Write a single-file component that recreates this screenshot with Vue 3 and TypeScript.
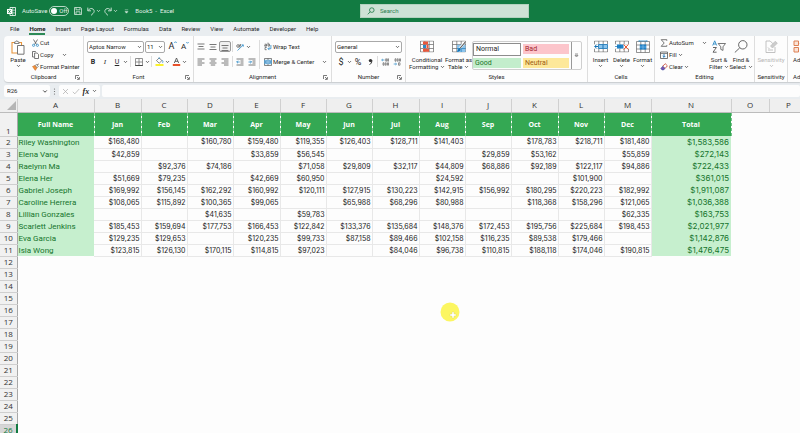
<script setup lang="ts">
import { ref } from 'vue'

interface Person {
  name: string
  months: string[]
  total: string
}

const tabs = ['File', 'Home', 'Insert', 'Page Layout', 'Formulas', 'Data', 'Review', 'View', 'Automate', 'Developer', 'Help']
const activeTab = ref('Home')
const autoSave = ref(false)
const cellRef = ref('R26')

const columnWidths = [17, 77, 47, 46, 46, 47, 46, 46, 47, 46, 46, 47, 46, 47, 80, 38, 39]
const letters = 'ABCDEFGHIJKLMNOP'.split('')
const months = ['Jan', 'Feb', 'Mar', 'Apr', 'May', 'Jun', 'Jul', 'Aug', 'Sep', 'Oct', 'Nov', 'Dec']

function person(name: string, values: string, total: string): Person {
  return { name, months: values.split(' ').map((v) => (v === '-' ? '' : '$' + v)), total: '$' + total }
}

const people: Person[] = [
  person('Riley Washington', '168,480 - 160,780 159,480 119,355 126,403 128,711 141,403 - 178,783 218,711 181,480', '1,583,586'),
  person('Elena Vang', '42,859 - - 33,859 56,545 - - - 29,859 53,162 - 55,859', '272,143'),
  person('Raelynn Ma', '- 92,376 74,186 - 71,058 29,809 32,117 44,809 68,886 92,189 122,117 94,886', '722,433'),
  person('Elena Her', '51,669 79,235 - 42,669 60,950 - - 24,592 - - 101,900 -', '361,015'),
  person('Gabriel Joseph', '169,992 156,145 162,292 160,992 120,111 127,915 130,223 142,915 156,992 180,295 220,223 182,992', '1,911,087'),
  person('Caroline Herrera', '108,065 115,892 100,365 99,065 - 65,988 68,296 80,988 - 118,368 158,296 121,065', '1,036,388'),
  person('Lillian Gonzales', '- - 41,635 - 59,783 - - - - - - 62,335', '163,753'),
  person('Scarlett Jenkins', '185,453 159,694 177,753 166,453 122,842 133,376 135,684 148,376 172,453 195,756 225,684 198,453', '2,021,977'),
  person('Eva Garcia', '129,235 129,653 - 120,235 99,733 87,158 89,466 102,158 116,235 89,538 179,466 -', '1,142,876'),
  person('Isla Wong', '123,815 126,130 170,115 114,815 97,023 - 84,046 96,738 110,815 188,118 174,046 190,815', '1,476,475'),
]
const emptyRows = Array.from({ length: 15 }, (_, i) => i + 12)
</script>

<template>
  <svg class="sprite" aria-hidden="true">
    <symbol id="chev" viewBox="0 0 5 4"><path d="M1 1.1 2.5 2.6 4 1.1" fill="none" stroke="currentColor" stroke-width=".8" /></symbol>
    <symbol id="launch" viewBox="0 0 5 5"><path d="M.5 4V.5H4M2 2l2 2M4.4 2v2.4H2" fill="none" stroke="#444" stroke-width=".7" /></symbol>
    <symbol id="grid" viewBox="0 0 14 12">
      <path d="M.5.5h13v11H.5zM.5 4h13M.5 8h13M4.8.5v11M9.2.5v11" fill="#fff" stroke="#666" stroke-width=".7" />
    </symbol>
  </svg>

  <div class="app">
    <header class="titlebar">
      <div class="quick">
        <svg class="logo" width="9" height="9" viewBox="0 0 9 9">
          <path d="M3 .5h5.5v8H3z" fill="none" stroke="#fff" stroke-width=".8" />
          <path d="M5.7.5v8M3 3.2h5.5M3 5.9h5.5" stroke="#fff" stroke-width=".6" />
          <path d="M0 2h5v5H0z" fill="#fff" />
          <path d="m1.4 3 2.2 3M3.6 3 1.4 6" stroke="#107c41" stroke-width=".8" />
        </svg>
        <label class="autosave">
          <span>AutoSave</span>
          <span class="switch">
            <input v-model="autoSave" type="checkbox" />
            <span class="knob"></span>
            <span>{{ autoSave ? 'On' : 'Off' }}</span>
          </span>
        </label>
        <button class="tool save" aria-label="Save">
          <svg width="8" height="8" viewBox="0 0 8 8" fill="none" stroke="#d5e9dd" stroke-width=".8"><path d="M.5.5h6.2l.8.8v6.2h-7zM2 .5v2.3h4V.5M2 7.5V4.8h4v2.7" /></svg>
        </button>
        <button class="tool" aria-label="Undo">
          <svg width="8" height="9" viewBox="0 0 8 9" fill="none" stroke="#d5e9dd" stroke-width=".9"><path d="M.8.6v3.2H4M1 3.6C2.400 1.400 4.600.9 6.200 2.200c1.600 1.500 1 3.200-.2 4.300L4 8.400" /></svg>
        </button>
        <svg class="chev light" width="5" height="4"><use href="#chev" /></svg>
        <button class="tool redo" aria-label="Redo">
          <svg width="8" height="9" viewBox="0 0 8 9" fill="none" stroke="#d5e9dd" stroke-width=".9"><path d="M7.200.6v3.200H4M7 3.600C5.600 1.400 3.400.9 1.800 2.200.2 3.700.8 5.400 2 6.500l2 1.900" /></svg>
        </button>
        <svg class="chev light" width="5" height="4"><use href="#chev" /></svg>
        <button class="tool customize" aria-label="Customize toolbar">
          <svg width="5" height="5" viewBox="0 0 5 5"><path d="M.8.8h3.400M1 2.600h3L2.500 4.200z" fill="#d5e9dd" stroke="#d5e9dd" stroke-width=".5" /></svg>
        </button>
        <span class="doc">Book5 &nbsp;-&nbsp; Excel</span>
      </div>
      <label class="search">
        <svg width="8" height="8" viewBox="0 0 8 8" fill="none" stroke="#1b7a45" stroke-width=".8"><circle cx="4.800" cy="3.100" r="2.300" /><path d="M3.200 4.800.8 7.300" /></svg>
        <input type="search" placeholder="Search" aria-label="Search" />
      </label>
    </header>

    <nav class="tabs">
      <button v-for="tab in tabs" :key="tab" :class="{ active: tab === activeTab }" @click="activeTab = tab">{{ tab }}</button>
    </nav>

    <section class="ribbon">
      <div class="group clipboard">
        <div class="body">
          <button class="big paste">
            <svg width="14" height="15" viewBox="0 0 14 15" fill="none">
              <path d="M1 2.500h9.500V13H1z" fill="#fff" stroke="#e8943a" stroke-width="1.100" />
              <path d="M3.500 3.500V2h1.200C4.800.4 6.800.4 6.900 2h1.200v1.500z" fill="#fff" stroke="#666" stroke-width=".8" />
              <path d="M6.500 5.500h6.500v8.700H6.500z" fill="#fff" stroke="#666" stroke-width=".9" />
            </svg>
            <span>Paste</span>
            <svg class="chev" width="5" height="4"><use href="#chev" /></svg>
          </button>
          <div class="stack">
            <button>
              <svg width="7" height="8" viewBox="0 0 7 8" fill="none"><path d="m1.500.5 3 5M5.500.5l-3 5" stroke="#555" stroke-width=".8" /><circle cx="1.600" cy="6.300" r="1.100" stroke="#2b8ac6" stroke-width=".8" /><circle cx="5.400" cy="6.300" r="1.100" stroke="#2b8ac6" stroke-width=".8" /></svg>
              Cut
            </button>
            <button>
              <svg width="7" height="8" viewBox="0 0 7 8" fill="#fff" stroke="#555" stroke-width=".8"><path d="M2.500 6H.5V.5h3.300" /><path d="M2.600 2h2.500l1.400 1.400v4.100H2.600z" /></svg>
              Copy
              <svg class="chev after" width="5" height="4"><use href="#chev" /></svg>
            </button>
            <button>
              <svg width="7" height="8" viewBox="0 0 7 8"><path d="M.5 3.500 3 2.400l2 2.400L3.300 7.400z" fill="#f0913a" stroke="#c9641c" stroke-width=".5" /><path d="m3.200 2.400 1.300-1 1.800 2-1.200 1.200z" fill="#fff" stroke="#555" stroke-width=".6" /><path d="m5.300 2.200 1.300-1.500" stroke="#555" /></svg>
              Format Painter
            </button>
          </div>
        </div>
        <footer>Clipboard<svg class="launch" width="5" height="5"><use href="#launch" /></svg></footer>
      </div>

      <div class="group font">
        <div class="body rows">
          <div class="row">
            <span class="pick family"><select aria-label="Font"><option>Aptos Narrow</option></select><svg class="chev" width="5" height="4"><use href="#chev" /></svg></span>
            <span class="pick size"><select aria-label="Font size"><option>11</option></select><svg class="chev" width="5" height="4"><use href="#chev" /></svg></span>
            <button class="cell letter large" aria-label="Increase font size">A<svg width="3" height="3" viewBox="0 0 3 3"><path d="M.3 2 1.500.7 2.700 2" fill="none" stroke="#2b8ac6" stroke-width=".8" /></svg></button>
            <button class="cell letter" aria-label="Decrease font size">A<svg width="3" height="3" viewBox="0 0 3 3"><path d="M.3 1 1.500 2.300 2.700 1" fill="none" stroke="#2b8ac6" stroke-width=".8" /></svg></button>
          </div>
          <div class="row">
            <button class="cell glyph bold">B</button>
            <button class="cell glyph italic">I</button>
            <button class="cell glyph under">U</button>
            <svg class="chev" width="5" height="4"><use href="#chev" /></svg>
            <i class="bar wide"></i>
            <button class="cell" aria-label="Borders"><svg width="8" height="8" viewBox="0 0 8 8" fill="none" stroke="#777" stroke-width=".8"><path d="M.5.500h7v7h-7zM4 .5v7M.5 4h7" /><path d="M.2 7.500h7.600" stroke="#333" /></svg></button>
            <svg class="chev" width="5" height="4"><use href="#chev" /></svg>
            <i class="bar"></i>
            <button class="cell" aria-label="Fill colour"><svg width="9" height="9" viewBox="0 0 9 9"><path d="M1.500 3.600 4.200.9l2.700 2.700-2.700 2.600z" fill="#fff" stroke="#555" stroke-width=".7" /><path d="M4.200 2V.3M7.300 3.300c1.300 1.700.5 2.400 0 2.400" fill="none" stroke="#2b8ac6" stroke-width=".8" /><path d="M.5 7h8v2h-8z" fill="#fbf22c" /></svg></button>
            <svg class="chev" width="5" height="4"><use href="#chev" /></svg>
            <button class="cell" aria-label="Font colour"><svg width="9" height="9" viewBox="0 0 9 9"><path d="m2.300 6 2.200-5 2.200 5M3 4.300h3" fill="none" stroke="#444" stroke-width=".8" /><path d="M.8 7h7.400v2H.8z" fill="#e8512a" /></svg></button>
            <svg class="chev" width="5" height="4"><use href="#chev" /></svg>
          </div>
        </div>
        <footer>Font<svg class="launch" width="5" height="5"><use href="#launch" /></svg></footer>
      </div>

      <div class="group alignment">
        <div class="body">
          <div class="rows aligns">
            <div class="row">
              <button class="cell" aria-label="Top align"><svg width="8" height="8" viewBox="0 0 8 8" stroke="#555" stroke-width=".8"><path d="M.5 1h7M1.500 3.500h5M.5 6h7" /></svg></button>
              <button class="cell" aria-label="Middle align"><svg width="8" height="8" viewBox="0 0 8 8" stroke="#555" stroke-width=".8"><path d="M.5 1.500h7M1.500 4h5M.5 6.500h7" /></svg></button>
              <button class="cell pressed" aria-label="Bottom align"><svg width="8" height="8" viewBox="0 0 8 8" stroke="#555" stroke-width=".8"><path d="M.5 2.500h7M1.500 5h5M.5 7.500h7" /></svg></button>
              <i class="bar"></i>
              <button class="cell" aria-label="Orientation"><svg width="8" height="8" viewBox="0 0 8 8" fill="none"><circle cx="2" cy="3" r="1.300" stroke="#555" stroke-width=".7" /><path d="M3.300 1.500v3M4.500 1v2.500" stroke="#555" stroke-width=".7" /><path d="M1.500 7.500 7.200 2M5.500 1.900h1.800v1.800" stroke="#2b8ac6" stroke-width=".8" /></svg></button>
              <svg class="chev" width="5" height="4"><use href="#chev" /></svg>
            </div>
            <div class="row">
              <button class="cell" aria-label="Align left"><svg width="8" height="8" viewBox="0 0 8 8" stroke="#555" stroke-width=".8"><path d="M.5 1h7M.5 3h4.500M.5 5h7M.5 7h4.500" /></svg></button>
              <button class="cell" aria-label="Centre"><svg width="8" height="8" viewBox="0 0 8 8" stroke="#555" stroke-width=".8"><path d="M.5 1h7M1.800 3h4.400M.5 5h7M1.800 7h4.400" /></svg></button>
              <button class="cell" aria-label="Align right"><svg width="8" height="8" viewBox="0 0 8 8" stroke="#555" stroke-width=".8"><path d="M.5 1h7M3 3h4.500M.5 5h7M3 7h4.500" /></svg></button>
              <i class="bar"></i>
              <button class="cell" aria-label="Decrease indent"><svg width="8" height="8" viewBox="0 0 8 8" fill="none" stroke="#555" stroke-width=".8"><path d="M.5 1h7M4.500 3h3M4.500 5h3M.5 7h7" /><path d="M3.700 4h-3M2 2.700.7 4 2 5.300" stroke="#2b8ac6" /></svg></button>
              <button class="cell" aria-label="Increase indent"><svg width="8" height="8" viewBox="0 0 8 8" fill="none" stroke="#555" stroke-width=".8"><path d="M.5 1h7M4.500 3h3M4.500 5h3M.5 7h7" /><path d="M.5 4h3M2.200 2.700 3.500 4 2.200 5.300" stroke="#2b8ac6" /></svg></button>
            </div>
          </div>
          <i class="bar tall"></i>
          <div class="rows wraps">
            <button class="row">
              <svg width="8" height="9" viewBox="0 0 8 9" fill="none"><path d="M.7 2.200h1.800v2H.7v-1h1.800M4 .6v3.500h1.500v-2H4M2.700 5.500H1v2.200h1.700" stroke="#555" stroke-width=".7" /><path d="M6.900 3v3.700H4.200M5.400 5.300 4 6.700l1.400 1.400" stroke="#2b8ac6" stroke-width=".8" /></svg>
              Wrap Text
            </button>
            <button class="row">
              <svg width="8" height="8" viewBox="0 0 8 8" fill="none"><path d="M.5.500h7v7h-7zM4 .5v7" stroke="#555" stroke-width=".7" /><path d="M.5 2.300h7v3.400h-7z" fill="#c5e2f5" stroke="#2b8ac6" stroke-width=".6" /><path d="M1.300 4h5.400M2.400 3 1.300 4l1.100 1M5.600 3l1.100 1-1.100 1" stroke="#1673b5" stroke-width=".7" /></svg>
              Merge &amp; Center
              <svg class="chev after" width="5" height="4"><use href="#chev" /></svg>
            </button>
          </div>
        </div>
        <footer>Alignment<svg class="launch" width="5" height="5"><use href="#launch" /></svg></footer>
      </div>

      <div class="group number">
        <div class="body rows">
          <div class="row">
            <span class="pick format"><select aria-label="Number format"><option>General</option></select><svg class="chev" width="5" height="4"><use href="#chev" /></svg></span>
          </div>
          <div class="row">
            <button class="cell glyph sign">$</button>
            <svg class="chev" width="5" height="4"><use href="#chev" /></svg>
            <button class="cell glyph sign">%</button>
            <button class="cell" aria-label="Comma style"><svg width="5" height="8" viewBox="0 0 5 8"><circle cx="2.500" cy="2.600" r="1.700" fill="#333" /><path d="M3.800 2.500c.2 2-.6 3.400-2.300 4" fill="none" stroke="#333" stroke-width=".9" /></svg></button>
            <i class="bar"></i>
            <button class="cell" aria-label="Increase decimal"><svg width="8" height="8" viewBox="0 0 8 8" fill="none" stroke-width=".7"><path d="M3.500 2H.7M1.800 1 .7 2l1.100 1" stroke="#2b8ac6" /><path d="M4.700.8h1v2.400h-1zM6.700.8h.9v2.400h-.9zM2 4.800h1v2.400H2zM4.200 4.800h1v2.400h-1zM6.500 4.800h1v2.400h-1z" stroke="#666" /></svg></button>
            <button class="cell" aria-label="Decrease decimal"><svg width="8" height="8" viewBox="0 0 8 8" fill="none" stroke-width=".7"><path d="M.7 6h2.800M2.400 5l1.100 1-1.100 1" stroke="#2b8ac6" /><path d="M2 .8h1v2.400H2zM4.200.8h1v2.400h-1zM6.500.8h1v2.400h-1zM5.500 4.800h1.500v2.400H5.500z" stroke="#666" /></svg></button>
          </div>
        </div>
        <footer>Number<svg class="launch" width="5" height="5"><use href="#launch" /></svg></footer>
      </div>

      <div class="group styles">
        <div class="body">
          <button class="big cond">
            <svg width="14" height="12" viewBox="0 0 14 12"><use href="#grid" /><path d="M3 1h5v3H3zM3 8.200h6v3H3z" fill="#e8583c" /><path d="M3 4.600h3v3H3z" fill="#2b8ac6" /><path d="M6.500 4.600h2v3h-2z" fill="#e8583c" /></svg>
            <span>Conditional<br />Formatting <svg class="chev" width="5" height="4"><use href="#chev" /></svg></span>
          </button>
          <button class="big fmt">
            <svg width="14" height="12" viewBox="0 0 14 12"><use href="#grid" /><path d="M5 4.200h8.500v7.300H5z" fill="#8cc4ec" /><path d="M5 8h8.500M9.200 4v7.500" stroke="#1673b5" stroke-width=".6" /><path d="M13 1.500 7.500 8" stroke="#fff" stroke-width="2.400" /><path d="M13.300 1.500 7.800 8" stroke="#555" stroke-width="1.100" /><path d="M7.800 7.200c1.500.6 1 3.800-2.800 4.300 1-1.500.8-3.600 2.800-4.300" fill="#1673b5" /></svg>
            <span>Format as<br />Table <svg class="chev" width="5" height="4"><use href="#chev" /></svg></span>
          </button>
          <div class="gallery">
            <div class="swatches">
              <button class="normal">Normal</button>
              <button class="bad">Bad</button>
              <button class="good">Good</button>
              <button class="neutral">Neutral</button>
            </div>
            <button class="more" aria-label="More styles"><svg width="5" height="5" viewBox="0 0 5 5"><path d="M1 1h3M1 2.400h3L2.500 4z" fill="none" stroke="#555" stroke-width=".6" /></svg></button>
          </div>
        </div>
        <footer>Styles</footer>
      </div>

      <div class="group cells">
        <div class="body">
          <button class="big"><svg width="14" height="12" viewBox="0 0 14 12"><use href="#grid" /><path d="M0 3.700h14v4.600H0z" fill="#fff" /><path d="M4.500 4h9v4h-9z" fill="#8cc4ec" stroke="#1673b5" stroke-width=".8" /><path d="M9 4v4M4 6H.8M2.500 4.200.8 6l1.700 1.800" fill="none" stroke="#1673b5" stroke-width="1" /></svg><span>Insert</span><svg class="chev" width="5" height="4"><use href="#chev" /></svg></button>
          <button class="big"><svg width="14" height="12" viewBox="0 0 14 12"><use href="#grid" /><path d="M0 3.700h14v4.600H0z" fill="#fff" /><path d="M2 4h6.500v4H2z" fill="#1f83c9" /><path d="M0 6h3M5.200 4v4" stroke="#1673b5" stroke-width=".7" /><path d="m8.700 4 4.600 5M13.300 4 8.700 9" stroke="#e8512a" stroke-width="1" /></svg><span>Delete</span><svg class="chev" width="5" height="4"><use href="#chev" /></svg></button>
          <button class="big"><svg width="14" height="13" viewBox="0 0 14 13"><use href="#grid" y="1" height="12" width="14" /><path d="M3 .3v1.400M11 .3v1.400M3 1h8" stroke="#2b8ac6" stroke-width=".8" /><path d="M3.800 4.500h6.500v5H3.800z" fill="#1f83c9" /><path d="M7 4.500v5M3.800 7h6.500" stroke="#a9d3f1" stroke-width=".5" /></svg><span>Format</span><svg class="chev" width="5" height="4"><use href="#chev" /></svg></button>
        </div>
        <footer>Cells</footer>
      </div>

      <div class="group editing">
        <div class="body">
          <div class="stack">
            <button>
              <svg width="8" height="8" viewBox="0 0 8 8"><path d="M6.800 1.800V.7H1.200L4.200 4l-3 3.300h5.600V6.200" fill="none" stroke="#555" stroke-width=".8" /></svg>
              AutoSum<svg class="chev after" width="5" height="4"><use href="#chev" /></svg>
            </button>
            <button>
              <svg width="8" height="8" viewBox="0 0 8 8" fill="none"><path d="M.5 1h7v6.500h-7z" stroke="#555" stroke-width=".8" /><path d="M.5 2.500h7" stroke="#555" stroke-width=".7" /><path d="M4 3v3.200M2.700 5 4 6.300 5.300 5" stroke="#1673b5" stroke-width=".9" /></svg>
              Fill<svg class="chev" width="5" height="4"><use href="#chev" /></svg>
            </button>
            <button>
              <svg width="8" height="8" viewBox="0 0 8 8"><path d="m2.700 3.300 2.500-2.600 2.200 2.100L5 5.500z" fill="#fff" stroke="#c8402b" stroke-width=".8" /><path d="M2.700 3.300 5 5.500 3.700 6.900H2L.8 5.500z" fill="#7654b5" stroke="#44549d" stroke-width=".6" /></svg>
              Clear<svg class="chev" width="5" height="4"><use href="#chev" /></svg>
            </button>
          </div>
          <button class="big sort">
            <svg width="14" height="13" viewBox="0 0 14 13" fill="none"><path d="m.7 5.500 2-4.700 2 4.700M1.400 4h2.600" stroke="#2b8ac6" stroke-width=".9" /><path d="M1 7.500h3.400L1 12.200h3.600" stroke="#555" stroke-width=".9" /><path d="M6.200 3.500h7.300L11 6.800v3.600l-2.200-1V6.800z" stroke="#555" stroke-width=".8" /></svg>
            <span>Sort &amp;<br />Filter <svg class="chev" width="5" height="4"><use href="#chev" /></svg></span>
          </button>
          <button class="big find">
            <svg width="14" height="13" viewBox="0 0 14 13" fill="none" stroke="#555"><circle cx="8.800" cy="4.800" r="4.200" stroke-width=".9" /><path d="M5.700 7.900.8 12.500" stroke-width=".9" /></svg>
            <span>Find &amp;<br />Select <svg class="chev" width="5" height="4"><use href="#chev" /></svg></span>
          </button>
        </div>
        <footer>Editing</footer>
      </div>

      <div class="group sensitivity">
        <div class="body">
          <button class="big" disabled>
            <svg width="13" height="13" viewBox="0 0 13 13" fill="none" stroke="#bbb"><path d="M5 1H1v11.500h9V7" stroke-width=".9" /><path d="m5.500 6 4.800-4.800 2 2L7.500 8z" fill="#ccc" stroke-width=".7" /><path d="m3 7.500 1.500 1.500M3 10h5M5 .8l3 3" stroke-width=".9" /></svg>
            <span>Sensitivity</span>
            <svg class="chev" width="5" height="4"><use href="#chev" /></svg>
          </button>
        </div>
        <footer>Sensitivity</footer>
      </div>

      <div class="group addins">
        <div class="body">
          <button class="big">
            <svg width="13" height="13" viewBox="0 0 13 13" fill="#fbe3d5" stroke="#dd8055" stroke-width="1"><path d="M1 1h4.500v4.500H1zM1 7.500h4.500V12H1zM7.500 7.500H12V12H7.500zM9.700.800 12.400 3.300 9.700 6 7 3.300z" /></svg>
            <span>Ad</span>
          </button>
        </div>
        <footer>Ad</footer>
      </div>
    </section>

    <section class="formulabar">
      <label class="namebox"><input v-model="cellRef" aria-label="Name box" /><svg class="chev" width="6" height="5"><use href="#chev" /></svg></label>
      <svg class="dots" width="3" height="7" viewBox="0 0 3 7" fill="#666"><circle cx="1.500" cy="1" r=".6" /><circle cx="1.500" cy="3.500" r=".6" /><circle cx="1.500" cy="6" r=".6" /></svg>
      <div class="fxbox">
        <button aria-label="Cancel"><svg width="7" height="7" viewBox="0 0 7 7"><path d="m1 1 5 5M6 1 1 6" stroke="#aaa" stroke-width=".7" /></svg></button>
        <button aria-label="Enter"><svg width="8" height="7" viewBox="0 0 8 7"><path d="m.8 3.800 2 2L7.200 1" fill="none" stroke="#aaa" stroke-width=".7" /></svg></button>
        <button class="fx">fx</button>
        <svg class="chev" width="5" height="4"><use href="#chev" /></svg>
      </div>
      <input class="formula" aria-label="Formula" />
    </section>

    <main class="sheet">
      <table>
        <colgroup><col v-for="(w, i) in columnWidths" :key="i" :style="{ width: w + 'px' }" /></colgroup>
        <thead>
          <tr>
            <th class="corner"><svg width="9" height="9" viewBox="0 0 9 9"><path d="M9 0v9H0z" fill="#b5b5b5" /></svg></th>
            <th v-for="l in letters" :key="l" scope="col">{{ l }}</th>
          </tr>
        </thead>
        <tbody>
          <tr class="heading">
            <th scope="row">1</th>
            <td>Full Name</td>
            <td v-for="m in months" :key="m">{{ m }}</td>
            <td>Total</td>
          </tr>
          <tr v-for="(p, i) in people" :key="p.name">
            <th scope="row">{{ i + 2 }}</th>
            <td class="name">{{ p.name }}</td>
            <td v-for="(v, j) in p.months" :key="j" class="value">{{ v }}</td>
            <td class="total">{{ p.total }}</td>
          </tr>
          <tr v-for="n in emptyRows" :key="n" :class="{ current: n === 26 }">
            <th scope="row">{{ n }}</th>
          </tr>
        </tbody>
      </table>
      <svg class="pointer" width="20" height="20" viewBox="0 0 20 20"><circle cx="10" cy="10" r="9.500" fill="#fcf661" /><path d="M12 10h2v2h2v2h-2v2h-2v-2h-2v-2h2z" fill="#fff" stroke="#d9d46c" stroke-width=".4" /></svg>
    </main>
  </div>
</template>

<style>
body { margin: 0; background: #fdfdfd; }
</style>

<style scoped>
.sprite { position: absolute; width: 0; height: 0; }
.app {
  height: 100vh; overflow: hidden; display: flex; flex-direction: column;
  background: #e9edf0; color: #262626; font: 6px/8px Roboto, "Open Sans", sans-serif;
}
button, input, select { font: inherit; color: inherit; border: 0; padding: 0; margin: 0; background: none; outline: none; border-radius: 0; }
button { display: flex; align-items: center; white-space: nowrap; }
svg { flex: none; display: block; }
.chev { color: #444; }

.titlebar { flex: none; height: 22px; display: flex; align-items: center; background: #127b42; color: #e4f1e9; }
.quick { flex: 0 0 353px; display: flex; align-items: center; padding-left: 7px; }
.autosave { display: flex; align-items: center; gap: 2px; margin-left: 6px; }
.switch { position: relative; display: flex; align-items: center; gap: 2px; width: 20px; height: 10px; box-sizing: border-box; padding-left: 1px; border: 1px solid #b7d7c4; border-radius: 5px; line-height: 8px; }
.switch input { position: absolute; inset: 0; opacity: 0; }
.knob { width: 6px; height: 6px; border-radius: 50%; background: #fff; }
.tool { margin-left: 5px; }
.tool + .chev { margin-left: 1px; }
.redo { margin-left: 3px; }
.customize { margin-left: 6px; }
.light { color: #d5e9dd; }
.doc { margin-left: 6px; }
.search { flex: 0 0 169px; box-sizing: border-box; height: 14px; display: flex; align-items: center; gap: 5px; padding-left: 6px; background: #cee2d6; border: 1px solid #b3d2bf; color: #1b7a45; }
.search input { flex: 1; min-width: 0; }
.search input::placeholder { color: #2b7f50; opacity: 1; }

.tabs { flex: none; height: 14px; display: flex; align-items: stretch; gap: 10px; padding-left: 10px; }
.tabs button { border-bottom: 2px solid transparent; padding-top: 2px; margin-bottom: 1px; }
.tabs .active { font-weight: 700; color: #222; border-bottom-color: #2c8a57; }

.ribbon { flex: none; height: 46px; margin-left: 4px; display: flex; overflow: hidden; background: #fdfdfd; border-radius: 4px 0 0 4px; box-shadow: 0 1px 1px #c9cdd0; }
.group { flex: none; box-sizing: border-box; display: flex; flex-direction: column; border-right: 1px solid #dedede; padding-top: 1px; }
.body { flex: none; height: 36px; display: flex; }
.group footer { position: relative; text-align: center; line-height: 8px; }
.launch { position: absolute; right: 3px; top: 2px; }
.clipboard { width: 80px; }
.font { width: 110px; }
.alignment { width: 138px; }
.number { width: 74px; }
.styles { width: 182px; }
.cells { width: 67px; }
.editing { width: 100px; }
.sensitivity { width: 33px; }
.addins { flex: 1; border-right: 0; }
.addins footer { text-align: left; padding-left: 5px; }

.big { flex-direction: column; align-self: flex-start; padding-top: 3px; line-height: 7px; text-align: center; }
.big > svg:first-child { height: 13px; }
.big > span { margin-top: 3px; }
.big > .chev { margin-top: 1px; }
.big span .chev { display: inline-block; vertical-align: middle; }
.big:disabled { color: #b5b5b5; }
.big:disabled .chev { color: #b5b5b5; }
.paste { width: 28px; }
.paste.big > svg:first-child { height: 15px; }
.paste.big > span { margin-top: 1px; }
.stack { display: flex; flex-direction: column; }
.stack button { height: 12px; gap: 1px; }
.after { margin-left: 7px; }

.rows { display: flex; flex-direction: column; padding-top: 2px; box-sizing: border-box; }
.row { height: 15px; display: flex; align-items: center; }
.body.rows { padding-left: 3px; }
.cell { justify-content: center; width: 12px; height: 11px; }
.bar { width: 1px; height: 11px; background: #dcdcdc; margin: 0 1px; }
.wide { margin: 0 2px; }
.pick { position: relative; box-sizing: border-box; display: flex; align-items: center; height: 12px; border: 1px solid #a9a9a9; border-radius: 2px; background: #fff; }
.pick select { appearance: none; width: 100%; padding-left: 1px; }
.pick .chev { position: absolute; right: 1px; top: 3px; pointer-events: none; }
.family { width: 57px; }
.size { width: 20px; margin: 0 1px; }
.format { width: 67px; }
.letter { align-items: flex-start; font-size: 8px; line-height: 11px; }
.letter.large { font-size: 9px; margin-left: 1px; }
.glyph { font-size: 7px; }
.bold { font-weight: 700; }
.italic { font-style: italic; font-family: "Liberation Serif", serif; }
.under { text-decoration: underline; }
.sign { font-size: 9px; }
.pressed { box-sizing: border-box; width: 12px; border: 1px solid #999; border-radius: 2px; background: #f0f0f0; }
.aligns { width: 64px; padding-left: 1px; }
.tall { height: 29px; margin: 3px 4px 0 1px; }
.wraps .row { gap: 1px; }

.cond { width: 38px; margin-left: 2px; }
.fmt { width: 25px; }
.gallery { display: flex; align-self: flex-start; margin-top: 4px; margin-left: 1px; border: 1px solid #cfcfcf; border-radius: 2px; }
.swatches { display: grid; grid-template-columns: 48px 46px; align-items: center; gap: 1px 2px; padding-right: 2px; }
.swatches button { height: 10px; padding-left: 2px; font-size: 7px; }
.swatches .normal { height: 13px; border: 1px solid #8d8d8d; background: #fff; }
.swatches .bad { background: #fcc5cb; color: #a3262a; }
.swatches .good { background: #c3edcc; color: #1b7428; }
.swatches .neutral { background: #fde89a; color: #9c5b12; }
.more { width: 10px; height: 27px; justify-content: center; border-left: 1px solid #999; }

.cells .body { padding-left: 2px; }
.cells .big { width: 21px; }
.editing .stack { width: 52px; padding-left: 5px; }
.sort { width: 22px; margin-left: -4px; }
.find { width: 22px; }
.sensitivity .big { width: 32px; }
.addins .big { padding-left: 5px; align-items: flex-start; }

.formulabar { flex: none; height: 12px; margin: 3px 0 2px 4px; display: flex; align-items: center; }
.formulabar > label, .fxbox, .formula { height: 12px; background: #fdfdfd; border-radius: 2px; }
.namebox { width: 46px; display: flex; align-items: center; }
.namebox input { width: 38px; padding-left: 3px; box-sizing: border-box; }
.dots { margin: 0 3px; }
.fxbox { width: 41px; display: flex; align-items: center; justify-content: space-evenly; }
.fx { font: italic 700 8px "Liberation Serif", serif; }
.formula { flex: 1; min-width: 0; margin-left: 2px; }

.sheet { position: relative; flex: 1; overflow: hidden; background: #fdfdfd; }
table { width: 808px; table-layout: fixed; border-collapse: collapse; }
th, td { box-sizing: border-box; height: 12px; padding: 0; overflow: hidden; white-space: nowrap; font-weight: 400; }
thead th { height: 13px; font: 8px/12px "Open Sans", sans-serif; background: #efefef; border-right: 1px solid #d0d0d0; border-bottom: 1px solid #bcbcbc; color: #333; }
tbody th { background: #f1f1f1; border-right: 1px solid #a8a8a8; border-bottom: 1px solid #cfcfcf; font: 8px/10px "Open Sans", sans-serif; color: #333; padding-bottom: 1px; }
.corner svg { margin: 1px 1px 0 auto; }
.heading th { height: 24px; vertical-align: bottom; padding-bottom: 0; }
.heading td { height: 24px; background: #34a853; color: #fff; font: 700 7px/12px "Open Sans", sans-serif; text-align: center; border-right: 1px dashed #74c48a; padding-top: 1px; }
.name { background: #c6efce; color: #15742c; font: 8px/11px Roboto, sans-serif; padding-left: 1px; }
.value { font: 7px/10px Inter, sans-serif; text-align: right; padding: 1px 1px 0 0; border-right: 1px solid #e8e8e8; border-bottom: 1px solid #e8e8e8; color: #222; }
.total { background: #c6efce; color: #15742c; font: 8px/11px Inter, sans-serif; text-align: right; padding-right: 2px; }
.current th { background: #d6d6d6; color: #127b42; border-right: 2px solid #127b42; }
.pointer { position: absolute; left: 440px; top: 203px; }
</style>
